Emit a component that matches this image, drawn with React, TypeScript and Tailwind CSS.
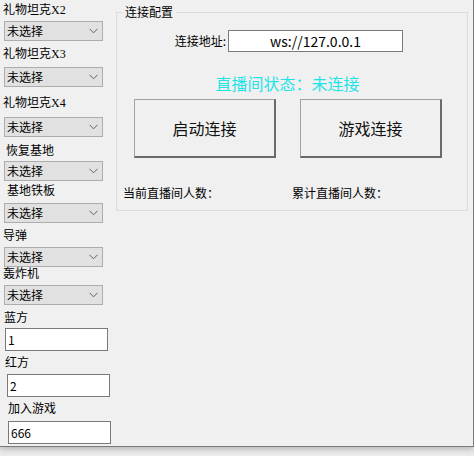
import React from "react";

// 左侧礼物/阵营配置项
interface Field {
  label: string;
  labelTop: number; // 标签与上一个控件的间距
  labelLeft: number;
  controlTop: number;
  kind: "select" | "input";
  value?: string;
  inputLeft?: number;
}

const fields: Field[] = [
  { label: "礼物坦克X2", labelTop: 3, labelLeft: 3, controlTop: 4, kind: "select" },
  { label: "礼物坦克X3", labelTop: 6, labelLeft: 3, controlTop: 6, kind: "select" },
  { label: "礼物坦克X4", labelTop: 9, labelLeft: 3, controlTop: 7, kind: "select" },
  { label: "恢复基地", labelTop: 7, labelLeft: 6, controlTop: 3, kind: "select" },
  { label: "基地铁板", labelTop: 3, labelLeft: 7, controlTop: 5, kind: "select" },
  { label: "导弹", labelTop: 6, labelLeft: 3, controlTop: 4, kind: "select" },
  { label: "轰炸机", labelTop: 0, labelLeft: 3, controlTop: 4, kind: "select" },
  { label: "蓝方", labelTop: 6, labelLeft: 4, controlTop: 3, kind: "input", value: "1", inputLeft: 5 },
  { label: "红方", labelTop: 5, labelLeft: 5, controlTop: 4, kind: "input", value: "2", inputLeft: 7 },
  { label: "加入游戏", labelTop: 5, labelLeft: 8, controlTop: 5, kind: "input", value: "666", inputLeft: 8 },
];

const cjk = { fontFamily: '"Noto Sans CJK SC", "Noto Sans", sans-serif' };
const labelFont = { fontFamily: '"Liberation Serif", "Noto Sans CJK SC", serif' };

function Chevron() {
  return (
    <svg width="9" height="6" viewBox="0 0 9 6" className="shrink-0">
      <polyline points="0.5,0.8 4.5,4.8 8.5,0.8" fill="none" stroke="#606060" strokeWidth="1" />
    </svg>
  );
}

function ComboBox() {
  return (
    <div className="ml-[4px] flex h-[20px] w-[99px] items-center justify-between border border-[#adadad] bg-[#e1e1e1] pl-[2px] pr-[4px]">
      <span className="text-[12px] leading-[14px] text-black" style={cjk}>
        未选择
      </span>
      <Chevron />
    </div>
  );
}

function FieldRow({ f }: { f: Field }) {
  return (
    <>
      <div
        className="h-[14px] text-[12px] leading-[14px] text-black whitespace-nowrap"
        style={{ ...labelFont, marginTop: f.labelTop, paddingLeft: f.labelLeft }}
      >
        {f.label}
      </div>
      <div style={{ marginTop: f.controlTop }}>
        {f.kind === "select" ? (
          <ComboBox />
        ) : (
          <div
            className="flex h-[23px] w-[103px] items-center border border-[#7a7a7a] bg-white pl-[2px] text-[12px] text-black"
            style={{ ...cjk, marginLeft: f.inputLeft }}
          >
            {f.value}
          </div>
        )}
      </div>
    </>
  );
}

function BigButton({ text }: { text: string }) {
  return (
    <div
      className="flex h-[59px] w-[142px] items-center justify-center border-t border-l border-t-[#a0a0a0] border-l-[#a0a0a0] border-r-2 border-b-2 border-r-[#6a6a6a] border-b-[#6a6a6a] bg-[#f0f0f0] text-[16px] text-[#111]"
      style={cjk}
    >
      {text}
    </div>
  );
}

export default function App() {
  return (
    <div className="h-[456px] w-[474px] overflow-hidden bg-[#ececec]">
      <div className="flex h-[447px] w-[474px] border-r border-b border-[#7b7b7b] bg-[#f0f0f0] shadow-[0_2px_6px_rgba(0,0,0,0.25)]">
        {/* 左侧：礼物与阵营设置 */}
        <div className="flex w-[116px] shrink-0 flex-col">
          {fields.map((f) => (
            <FieldRow key={f.label} f={f} />
          ))}
        </div>

        {/* 右侧：连接配置 */}
        <div className="relative mt-[12px] h-[199px] w-[352px] border border-[#dcdcdc]" style={cjk}>
          <span className="absolute left-[5px] top-[-8px] bg-[#f0f0f0] px-[3px] text-[12px] leading-[14px] text-black">
            连接配置
          </span>

          <div className="mt-[17px] flex items-center">
            <span className="w-[109px] text-right text-[12px] leading-[14px] text-black">连接地址:</span>
            <div className="ml-[2px] flex h-[22px] w-[175px] items-center justify-center border border-[#7a7a7a] bg-white text-[14px] text-black">
              ws://127.0.0.1
            </div>
          </div>

          <div className="mt-[21px] flex h-[20px] justify-center pr-[9px] text-[16px] leading-[20px] text-[#1fe3e8]">
            直播间状态：未连接
          </div>

          <div className="mt-[6px] flex gap-[24px] pl-[17px]">
            <BigButton text="启动连接" />
            <BigButton text="游戏连接" />
          </div>

          <div className="mt-[27px] flex h-[16px] pl-[6px] text-[12px] leading-[16px] text-black">
            <span className="w-[169px]">当前直播间人数：</span>
            <span>累计直播间人数：</span>
          </div>
        </div>
      </div>
    </div>
  );
}
